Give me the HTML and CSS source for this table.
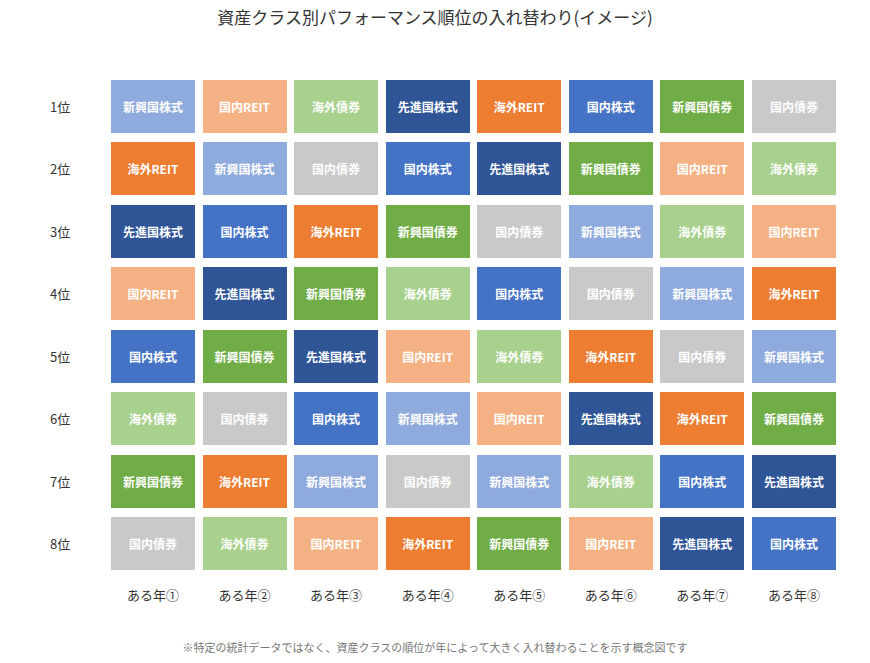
FILE: index.html
```html
<!DOCTYPE html>
<html lang="ja">
<head>
<meta charset="utf-8">
<title>資産クラス別パフォーマンス順位の入れ替わり(イメージ)</title>
<link rel="stylesheet" href="styles.css">
</head>
<body>
<div class="page">
  <h1 class="title">資産クラス別パフォーマンス順位の入れ替わり(イメージ)</h1>
  <div class="grid">
    <div class="rank">1位</div>
    <div class="cell em-eq">新興国株式</div>
    <div class="cell dom-reit">国内REIT</div>
    <div class="cell for-bond">海外債券</div>
    <div class="cell dev-eq">先進国株式</div>
    <div class="cell for-reit">海外REIT</div>
    <div class="cell dom-eq">国内株式</div>
    <div class="cell em-bond">新興国債券</div>
    <div class="cell dom-bond">国内債券</div>

    <div class="rank">2位</div>
    <div class="cell for-reit">海外REIT</div>
    <div class="cell em-eq">新興国株式</div>
    <div class="cell dom-bond">国内債券</div>
    <div class="cell dom-eq">国内株式</div>
    <div class="cell dev-eq">先進国株式</div>
    <div class="cell em-bond">新興国債券</div>
    <div class="cell dom-reit">国内REIT</div>
    <div class="cell for-bond">海外債券</div>

    <div class="rank">3位</div>
    <div class="cell dev-eq">先進国株式</div>
    <div class="cell dom-eq">国内株式</div>
    <div class="cell for-reit">海外REIT</div>
    <div class="cell em-bond">新興国債券</div>
    <div class="cell dom-bond">国内債券</div>
    <div class="cell em-eq">新興国株式</div>
    <div class="cell for-bond">海外債券</div>
    <div class="cell dom-reit">国内REIT</div>

    <div class="rank">4位</div>
    <div class="cell dom-reit">国内REIT</div>
    <div class="cell dev-eq">先進国株式</div>
    <div class="cell em-bond">新興国債券</div>
    <div class="cell for-bond">海外債券</div>
    <div class="cell dom-eq">国内株式</div>
    <div class="cell dom-bond">国内債券</div>
    <div class="cell em-eq">新興国株式</div>
    <div class="cell for-reit">海外REIT</div>

    <div class="rank">5位</div>
    <div class="cell dom-eq">国内株式</div>
    <div class="cell em-bond">新興国債券</div>
    <div class="cell dev-eq">先進国株式</div>
    <div class="cell dom-reit">国内REIT</div>
    <div class="cell for-bond">海外債券</div>
    <div class="cell for-reit">海外REIT</div>
    <div class="cell dom-bond">国内債券</div>
    <div class="cell em-eq">新興国株式</div>

    <div class="rank">6位</div>
    <div class="cell for-bond">海外債券</div>
    <div class="cell dom-bond">国内債券</div>
    <div class="cell dom-eq">国内株式</div>
    <div class="cell em-eq">新興国株式</div>
    <div class="cell dom-reit">国内REIT</div>
    <div class="cell dev-eq">先進国株式</div>
    <div class="cell for-reit">海外REIT</div>
    <div class="cell em-bond">新興国債券</div>

    <div class="rank">7位</div>
    <div class="cell em-bond">新興国債券</div>
    <div class="cell for-reit">海外REIT</div>
    <div class="cell em-eq">新興国株式</div>
    <div class="cell dom-bond">国内債券</div>
    <div class="cell em-eq">新興国株式</div>
    <div class="cell for-bond">海外債券</div>
    <div class="cell dom-eq">国内株式</div>
    <div class="cell dev-eq">先進国株式</div>

    <div class="rank">8位</div>
    <div class="cell dom-bond">国内債券</div>
    <div class="cell for-bond">海外債券</div>
    <div class="cell dom-reit">国内REIT</div>
    <div class="cell for-reit">海外REIT</div>
    <div class="cell em-bond">新興国債券</div>
    <div class="cell dom-reit">国内REIT</div>
    <div class="cell dev-eq">先進国株式</div>
    <div class="cell dom-eq">国内株式</div>
  </div>
  <div class="years">
    <div></div>
    <div class="year">ある年①</div>
    <div class="year">ある年②</div>
    <div class="year">ある年③</div>
    <div class="year">ある年④</div>
    <div class="year">ある年⑤</div>
    <div class="year">ある年⑥</div>
    <div class="year">ある年⑦</div>
    <div class="year">ある年⑧</div>
  </div>
  <p class="note">※特定の統計データではなく、資産クラスの順位が年によって大きく入れ替わることを示す概念図です</p>
</div>
</body>
</html>
```

FILE: styles.css
```css
html, body {
  margin: 0;
  padding: 0;
  background: #ffffff;
}

body {
  font-family: "Noto Sans CJK JP", "Noto Sans", sans-serif;
  color: #333333;
}

.page {
  width: 870px;
  height: 663px;
}

.title {
  margin: 0;
  padding-top: 5px;
  font-size: 17px;
  line-height: 24px;
  font-weight: 400;
  text-align: center;
  color: #333333;
}

.grid,
.years {
  display: grid;
  grid-template-columns: 103.4px repeat(8, 84px);
  column-gap: 7.57px;
}

.grid {
  margin-top: 51px;
  grid-auto-rows: 53px;
  row-gap: 9.43px;
}

.rank {
  display: flex;
  align-items: center;
  padding-left: 50px;
  font-size: 13px;
  color: #333333;
}

.cell {
  display: flex;
  align-items: center;
  justify-content: center;
  font-size: 12px;
  font-weight: 700;
  color: #ffffff;
}

.em-eq { background: #8faadc; }
.dom-reit { background: #f4b183; }
.for-bond { background: #a9d18e; }
.dev-eq { background: #2f5597; }
.for-reit { background: #ed7d31; }
.dom-eq { background: #4472c4; }
.em-bond { background: #70ad47; }
.dom-bond { background: #c9c9c9; }

.years {
  margin-top: 15px;
}

.year {
  text-align: center;
  font-size: 13px;
  line-height: 20px;
  color: #333333;
}

.note {
  margin: 34px 0 0;
  text-align: center;
  font-size: 11px;
  line-height: 16px;
  color: #777777;
}
```
